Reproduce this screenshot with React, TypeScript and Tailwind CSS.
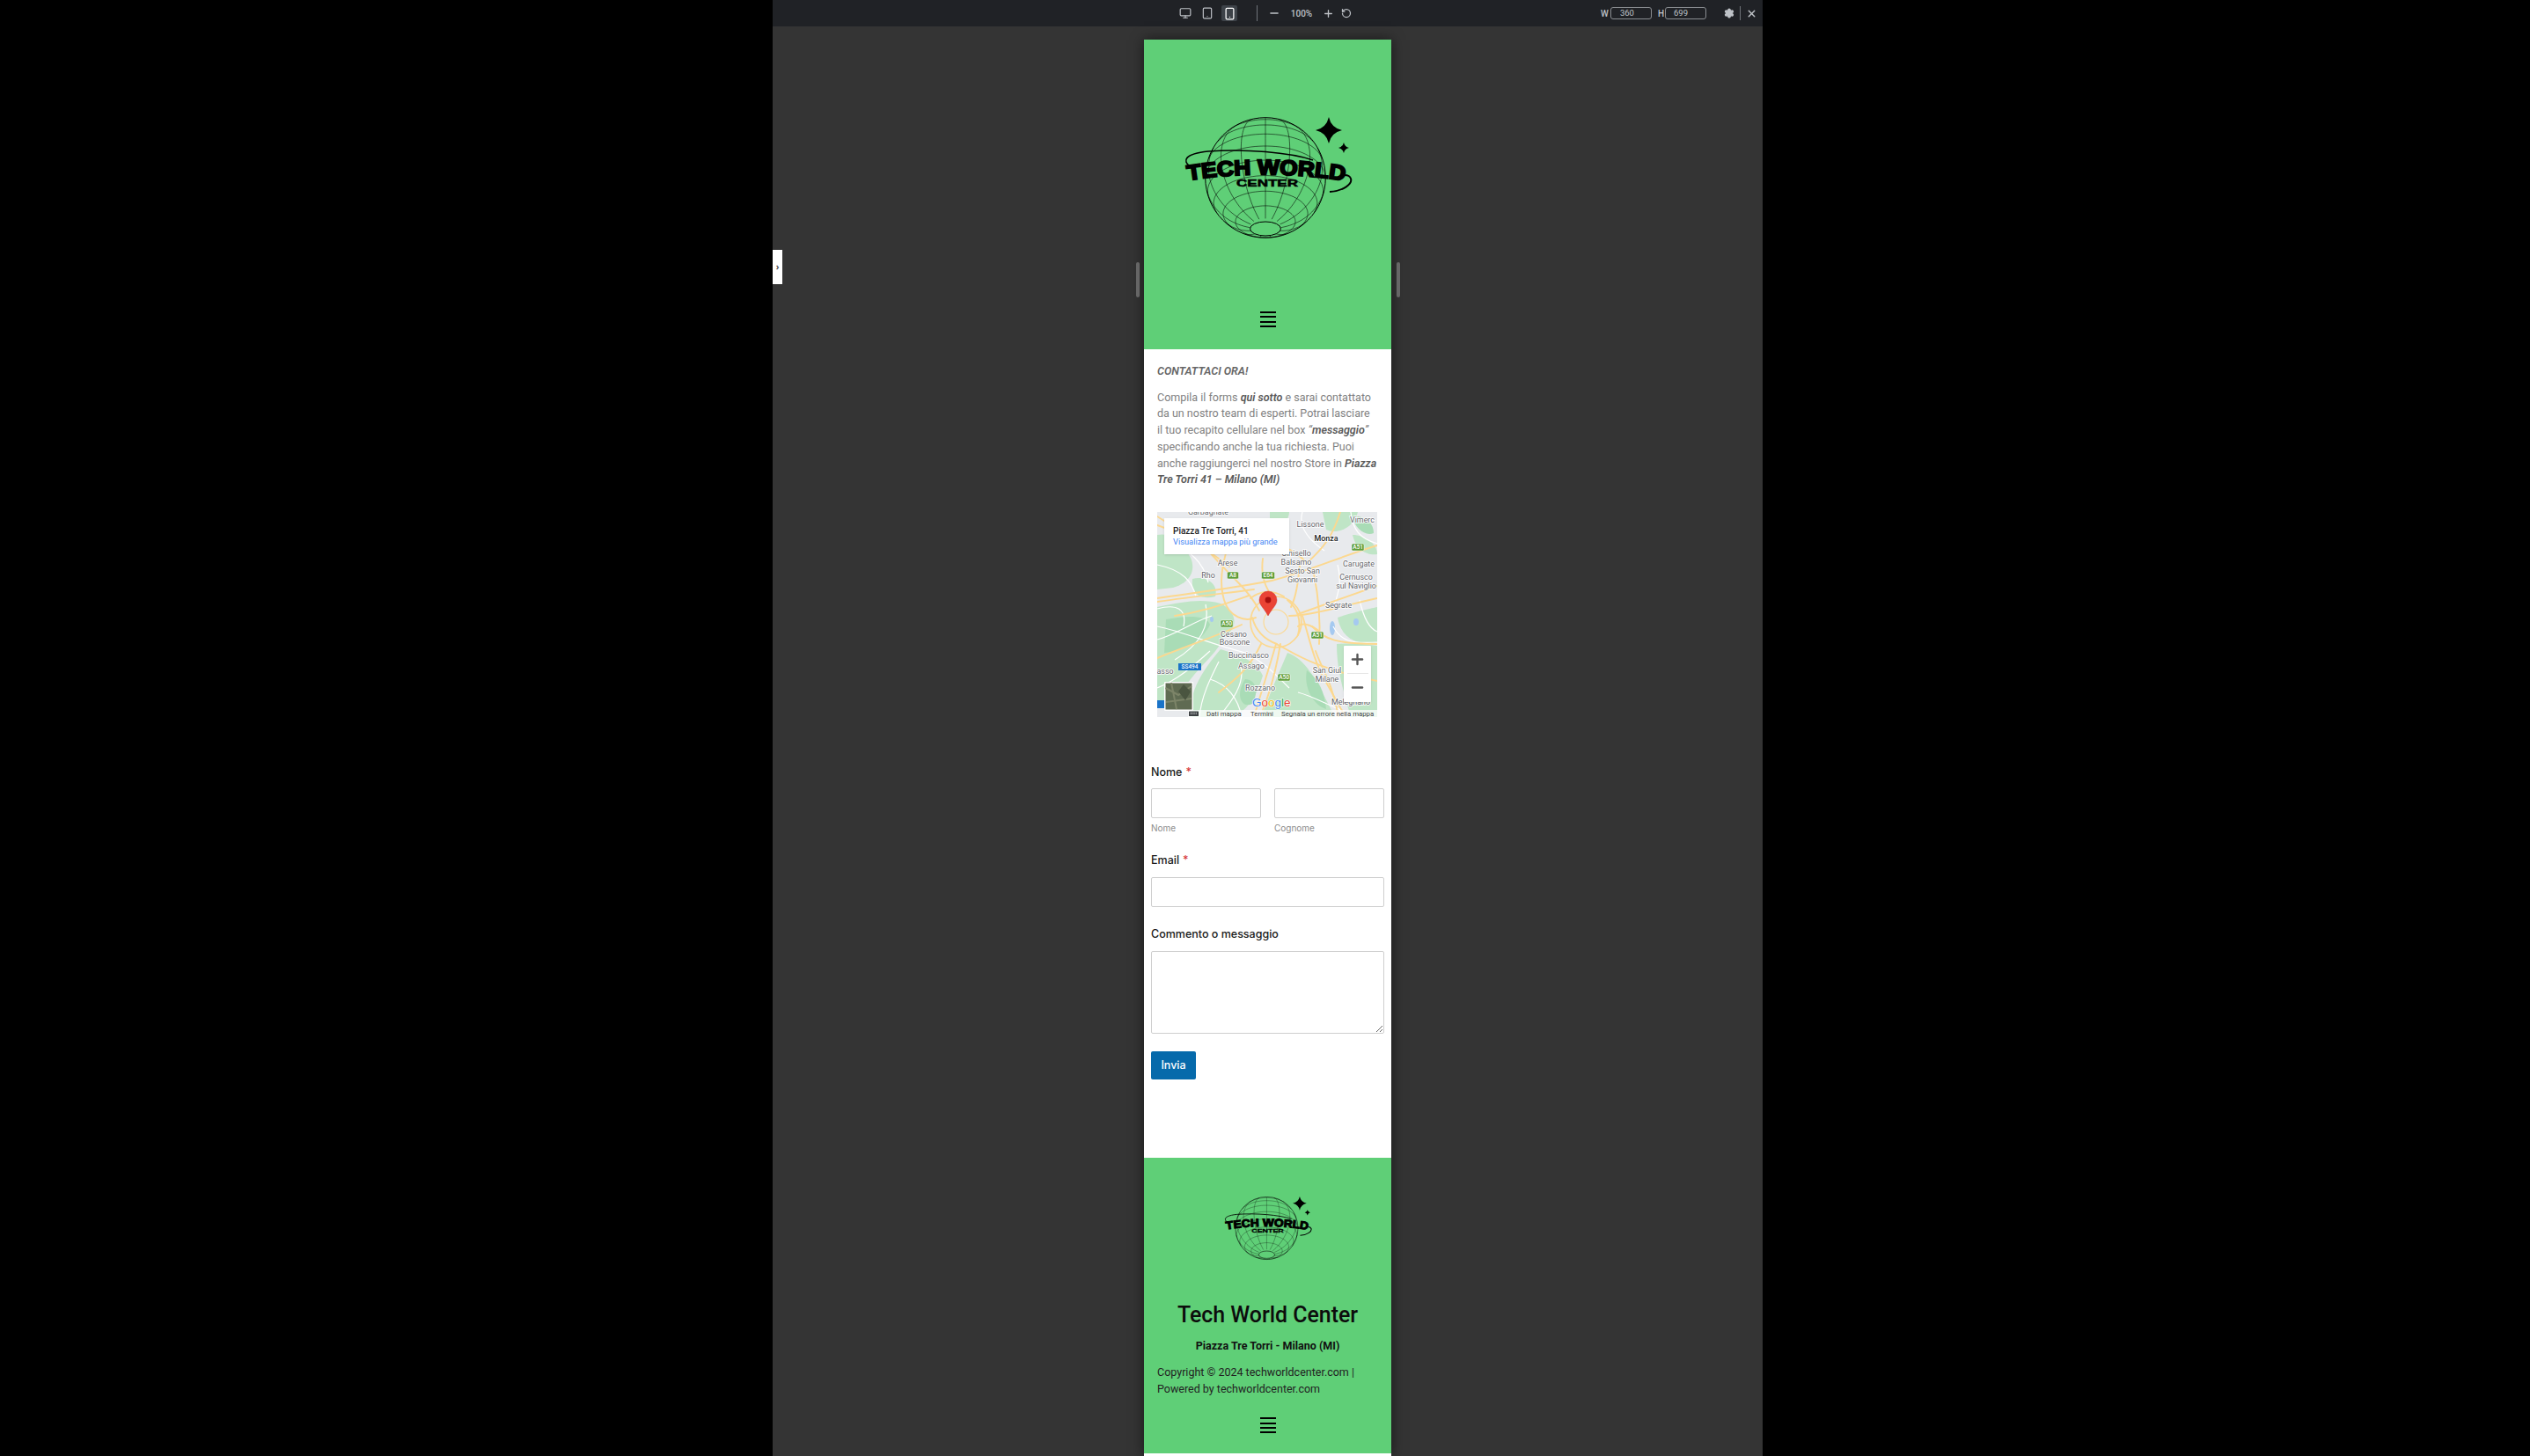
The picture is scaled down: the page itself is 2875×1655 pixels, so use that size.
import { Minus, Monitor, Plus, RotateCcw, Settings, Smartphone, Tablet, X } from "lucide-react";

// sphere wireframe seen from below, pole sits near the bottom edge
const TILT = (58 * Math.PI) / 180;

function project(colat: number, lon: number, r: number) {
  const c = (colat * Math.PI) / 180;
  const l = (lon * Math.PI) / 180;
  const x = Math.sin(c) * Math.cos(l);
  const y = Math.cos(c) * Math.sin(TILT) + Math.sin(c) * Math.sin(l) * Math.cos(TILT);
  const z = Math.cos(c) * Math.cos(TILT) - Math.sin(c) * Math.sin(l) * Math.sin(TILT);
  return { x: x * r, y: y * r, z };
}

function wirePath(points: { x: number; y: number; z: number }[]) {
  let d = "";
  let pen = false;
  for (const p of points) {
    if (p.z < 0) {
      pen = false;
      continue;
    }
    d += `${pen ? "L" : "M"}${p.x.toFixed(1)} ${p.y.toFixed(1)} `;
    pen = true;
  }
  return d;
}

function globeLines(r: number) {
  const lines: string[] = [];
  for (let colat = 30; colat <= 150; colat += 15) {
    const pts = [];
    for (let lon = 0; lon <= 360; lon += 4) pts.push(project(colat, lon, r));
    lines.push(wirePath(pts));
  }
  for (let lon = 6; lon < 360; lon += 24) {
    const pts = [];
    for (let colat = 15; colat <= 178; colat += 3) pts.push(project(colat, lon, r));
    lines.push(wirePath(pts));
  }
  return lines;
}

const Star = ({ x, y, s }: { x: number; y: number; s: number }) => (
  <path
    d={`M${x} ${y - s} Q${x + s * 0.18} ${y - s * 0.18} ${x + s} ${y} Q${x + s * 0.18} ${y + s * 0.18} ${x} ${y + s} Q${x - s * 0.18} ${y + s * 0.18} ${x - s} ${y} Q${x - s * 0.18} ${y - s * 0.18} ${x} ${y - s}Z`}
    fill="#000"
  />
);

const Logo = ({ id, className }: { id: string; className: string }) => (
  <svg viewBox="0 0 192 140" className={className}>
    <defs>
      <path id={`${id}-arc`} d="M5 72 Q93 58 186 73" />
    </defs>
    <g transform="translate(93 69)" fill="none" stroke="#000">
      {globeLines(68).map((d, i) => (
        <path key={i} d={d} strokeWidth={0.55} />
      ))}
      <circle r={68.3} strokeWidth={1} />
      <ellipse cx={0} cy={58} rx={17.5} ry={8} strokeWidth={1} fill="#5fcf77" />
    </g>
    <path d="M7 56 C-1 50 0 42 28 39 C70 36 120 40 147 49" fill="none" stroke="#000" strokeWidth={1.6} />
    <path d="M166 85 C182 84 192 76 190 70 C189 67 186 66 183 66" fill="none" stroke="#000" strokeWidth={2} />
    <text fontFamily="'Liberation Sans', sans-serif" fontWeight={700} fontSize={24} fill="#000" stroke="#000" strokeWidth={2}>
      <textPath href={`#${id}-arc`} textLength={179} lengthAdjust="spacingAndGlyphs">
        TECH WORLD
      </textPath>
    </text>
    <text x={95} y={79} textAnchor="middle" fontFamily="'Liberation Sans', sans-serif" fontWeight={700} fontSize={10.5} fill="#000" stroke="#000" strokeWidth={0.5} textLength={70} lengthAdjust="spacingAndGlyphs">
      CENTER
    </text>
    <Star x={165} y={15} s={15} />
    <Star x={182} y={35} s={6} />
  </svg>
);

const Burger = () => (
  <div className="flex w-[18px] flex-col gap-[3.3px]">
    <div className="h-[2px] bg-black" />
    <div className="h-[2px] bg-black" />
    <div className="h-[2px] bg-black" />
    <div className="h-[2px] bg-black" />
  </div>
);

const labels: [string, number, number, boolean?][] = [
  ["Lissone", 174, 17],
  ["Vimerc", 233, 12],
  ["Monza", 192, 33, true],
  ["Cinisello", 158, 50],
  ["Balsamo", 158, 60],
  ["Carugate", 229, 62],
  ["Arese", 80, 61],
  ["Rho", 58, 75],
  ["Sesto San", 165, 70],
  ["Giovanni", 165, 80],
  ["Cernusco", 226, 77],
  ["sul Naviglio", 226, 87],
  ["Segrate", 206, 109],
  ["Cesano", 87, 142],
  ["Boscone", 88, 151],
  ["Buccinasco", 104, 166],
  ["Assago", 107, 178],
  ["asso", 9, 184],
  ["Rozzano", 117, 203],
  ["San Giul", 193, 183],
  ["Milane", 193, 193],
  ["Melegnano", 220, 219],
  ["Garbagnate", 58, 3],
];

const shields: [string, number, number, number][] = [
  ["A51", 228, 40, 14],
  ["A8", 86, 72, 13],
  ["E64", 126, 72, 15],
  ["A50", 79, 127, 14],
  ["A51", 182, 140, 14],
  ["A50", 144, 188, 14],
];

const yellowRoads = [
  "M0 98 C40 92 90 86 130 78 C170 68 210 50 250 38",
  "M0 102 C40 96 80 92 110 88",
  "M80 40 C74 60 70 80 76 100 C82 120 100 125 112 120",
  "M120 53 C118 68 120 80 128 92",
  "M150 118 C170 118 190 112 250 98",
  "M160 116 L250 84",
  "M165 118 C172 140 178 170 190 190 L214 233",
  "M180 158 C186 176 200 196 206 233",
  "M135 150 C128 175 118 205 110 233",
  "M140 150 C135 180 128 205 120 225",
  "M45 30 C60 46 72 60 90 78 C100 88 110 100 116 112",
  "M0 15 C30 25 60 45 82 62",
  "M96 128 C70 140 40 150 0 166",
  "M135 150 C150 156 170 176 250 192",
  "M162 60 C160 80 158 96 152 108",
  "M178 70 C182 90 186 120 184 150",
  "M208 0 C200 26 190 40 170 58",
  "M104 95 C90 100 60 112 20 118",
  "M70 205 C90 190 106 176 118 150",
  "M160 130 C166 124 180 130 188 140",
  "M0 5 C12 12 20 18 30 30",
  "M120 40 C135 38 150 36 170 58",
  "M106 98 C116 90 130 88 144 96",
  "M148 100 C160 110 164 124 160 140",
  "M108 120 C112 135 122 145 136 150",
  "M176 130 C190 145 205 150 250 150",
];

const whiteRoads = [
  "M0 130 C30 136 60 150 100 160 C120 170 130 180 150 200",
  "M20 168 C50 150 60 128 55 105",
  "M0 60 C30 66 40 80 44 96",
  "M70 170 C60 190 50 210 48 233",
  "M200 130 C208 146 220 150 250 148",
  "M160 205 C180 210 196 222 230 233",
  "M30 130 C34 110 22 104 0 110",
  "M95 175 C100 195 85 215 70 233",
  "M220 0 C222 20 230 30 250 36",
  "M165 0 C160 16 170 30 190 44",
  "M18 40 C36 42 52 56 58 80",
  "M205 60 C210 80 206 92 200 110",
  "M0 145 C20 140 40 125 62 118",
  "M0 200 C24 190 40 176 60 158",
  "M60 190 C80 196 92 212 96 233",
  "M230 100 C234 118 240 132 250 136",
];

const GoogleMapBox = () => (
  <div className="relative h-[233px] w-[250px] overflow-hidden bg-[#e8eaed]">
    <svg viewBox="0 0 250 233" className="h-full w-full">
      <g fill="#bfe5c6">
        <path d="M0 108 C30 102 50 98 72 104 C92 114 92 132 76 142 C68 160 52 172 38 190 C26 205 14 215 0 222Z" />
        <path d="M72 156 C90 162 110 166 120 186 C114 205 106 225 84 233 L40 233 C34 212 46 186 72 156Z" />
        <path d="M148 160 C170 168 180 190 202 233 L118 233 C126 212 136 188 148 160Z" />
        <path d="M0 26 C18 22 30 38 38 52 C44 66 38 80 18 86 L0 88Z" />
        <path d="M40 76 C56 72 70 82 66 96 C50 100 38 94 40 76Z" />
        <path d="M188 0 L228 0 C224 18 204 26 192 20Z" />
        <path d="M205 120 C222 114 250 108 250 108 L250 148 C234 152 210 148 205 120Z" />
        <path d="M204 150 C226 148 250 152 250 152 L250 233 L220 233 C212 205 204 180 204 150Z" />
        <path d="M128 0 L150 0 C150 10 140 18 128 14Z" />
        <path d="M222 26 C236 26 250 36 250 48 C240 50 226 44 222 26Z" />
      </g>
      <g fill="#a9dcb6">
        <path d="M10 122 C30 118 56 116 60 128 C50 148 30 158 8 160Z" />
        <path d="M100 190 C112 190 116 204 108 218 C96 224 88 208 100 190Z" />
        <path d="M170 180 C184 190 190 205 192 224 C178 220 166 200 170 180Z" />
        <path d="M222 5 C236 4 246 12 246 24 C236 28 224 18 222 5Z" />
      </g>
      <g fill="#a5c9f0">
        <ellipse cx="199" cy="132" rx="3" ry="8" />
        <ellipse cx="226" cy="125" rx="3" ry="4" />
        <ellipse cx="62" cy="122" rx="2" ry="3" />
      </g>
      <g fill="none" stroke="#fff" strokeWidth={1.2}>
        {whiteRoads.map((d, i) => (
          <path key={i} d={d} />
        ))}
      </g>
      <g fill="none" stroke="#fcd88f" strokeWidth={1.9} strokeLinecap="round">
        {yellowRoads.map((d, i) => (
          <path key={i} d={d} />
        ))}
        <circle cx={135} cy={125} r={29} strokeWidth={1.7} />
        <circle cx={135} cy={125} r={14} strokeWidth={1.1} />
      </g>
      <g fontFamily="Roboto, sans-serif" fontSize={8.9} fill="#5f6368" stroke="#fff" strokeWidth={1.6} textAnchor="middle" style={{ paintOrder: "stroke" }}>
        {labels.map(([t, x, y, bold]) => (
          <text key={t} x={x} y={y} fontWeight={bold ? 500 : 400} fill={bold ? "#202124" : "#5f6368"}>
            {t}
          </text>
        ))}
      </g>
      <g>
        {shields.map(([t, x, y, w], i) => (
          <g key={i}>
            <rect x={x - w / 2} y={y - 4} width={w} height={8} rx={1.5} fill="#5f9e3a" stroke="#fff" strokeWidth={0.5} />
            <text x={x} y={y + 2.4} fontFamily="Roboto, sans-serif" fontSize={6.5} fontWeight={500} fill="#fff" textAnchor="middle">
              {t}
            </text>
          </g>
        ))}
        <rect x={24} y={172} width={26} height={8} fill="#1a73c8" />
        <text x={37} y={178.4} fontFamily="Roboto, sans-serif" fontSize={6.5} fontWeight={500} fill="#fff" textAnchor="middle">
          SS494
        </text>
        <rect x={0} y={214} width={9} height={9} fill="#1a73c8" />
      </g>
      <path d="M126 118 C122 110 116 106 116 100 A10 10 0 1 1 136 100 C136 106 130 110 126 118Z" fill="#ea4335" stroke="#c5221f" strokeWidth={0.4} />
      <circle cx={126} cy={100} r={3.4} fill="#a50e0e" />
      <text x={108} y={221} fontFamily="'Liberation Sans', sans-serif" fontSize={13.5} fontWeight={400} stroke="#fff" strokeWidth={1} style={{ paintOrder: "stroke" }}>
        <tspan fill="#4285f4">G</tspan>
        <tspan fill="#ea4335">o</tspan>
        <tspan fill="#fbbc05">o</tspan>
        <tspan fill="#4285f4">g</tspan>
        <tspan fill="#34a853">l</tspan>
        <tspan fill="#ea4335">e</tspan>
      </text>
      <rect x={8} y={193} width={33} height={33} fill="#fff" rx={1} />
      <rect x={9.5} y={194.5} width={30} height={30} fill="#5f6b52" />
      <path d="M9.5 200 L24 208 L39 198 M16 194 L22 224 M10 216 L39 212" stroke="#7c8468" strokeWidth={2} fill="none" />
      <path d="M30 196 L38 204 L32 214 L24 204Z" fill="#4a5540" />
      <rect x={35} y={225} width={215} height={8} fill="#fff" fillOpacity={0.75} />
      <g fill="#5f6368">
        <rect x={36} y={226.5} width={11} height={5.5} rx={0.6} fill="#3c4043" />
      </g>
      <path d="M37.5 228 H45.5 M37.5 229.5 H45.5" stroke="#fff" strokeWidth={0.6} strokeDasharray="1 0.6" />
      <g fontFamily="Roboto, sans-serif" fontSize={7.8} fill="#444">
        <text x={56} y={231.6}>Dati mappa</text>
        <text x={106} y={231.6}>Termini</text>
        <text x={141} y={231.6}>Segnala un errore nella mappa</text>
      </g>
    </svg>
    <div className="absolute left-2 top-[7px] h-[41px] w-[142px] bg-white pl-[10px] pt-[8px] font-['Roboto',sans-serif] shadow-sm">
      <div className="text-[10px] font-medium leading-[13px] text-[#202124]">Piazza Tre Torri, 41</div>
      <div className="text-[9.3px] leading-[12px] text-[#4285f4]">Visualizza mappa più grande</div>
    </div>
    <div className="absolute left-[212px] top-[152px] flex h-[64px] w-[31px] flex-col items-center rounded-[1px] bg-white shadow-sm">
      <div className="flex h-[31px] items-center justify-center">
        <Plus className="h-[19px] w-[19px] text-[#555]" strokeWidth={3} />
      </div>
      <div className="h-px w-[24px] bg-[#e6e6e6]" />
      <div className="flex h-[32px] items-center justify-center">
        <Minus className="h-[19px] w-[19px] text-[#555]" strokeWidth={3} />
      </div>
    </div>
  </div>
);

const FormLabel = ({ text, required }: { text: string; required?: boolean }) => (
  <div className="text-[12.5px] font-medium leading-[16px] text-[#1a1a1a]">
    {text}
    {required && <span className="ml-[4px] text-[#d63637]">*</span>}
  </div>
);

const Field = ({ className }: { className: string }) => (
  <input className={`block rounded-[2px] border border-[#cfcfcf] bg-white ${className}`} />
);

const Preview = () => (
  <div className="relative flex h-[1610px] w-[281px] flex-col bg-white shadow-[0_0_14px_rgba(0,0,0,0.55)]">
    <header className="flex h-[352px] flex-col items-center bg-[#5fcf77]">
      <Logo id="top" className="mt-[88px] h-[140px] w-[192px]" />
      <div className="mt-[81px]">
        <Burger />
      </div>
    </header>

    <section className="px-[15px] pt-[16px] font-['Roboto',sans-serif] text-[12.5px] leading-[18.7px] text-[#818181]">
      <p className="font-semibold italic text-[#666]">CONTATTACI ORA!</p>
      <p className="mt-[11px]">
        Compila il forms <strong className="font-semibold italic text-[#5a5a5a]">qui sotto</strong> e sarai contattato da un nostro team di esperti. Potrai lasciare
        <br />
        il tuo recapito cellulare nel box <em>“<strong className="font-semibold text-[#5a5a5a]">messaggio</strong>”</em> specificando anche la tua richiesta. Puoi anche raggiungerci nel nostro Store in <strong className="font-semibold italic text-[#5a5a5a]">Piazza Tre Torri 41 – Milano (MI)</strong>
      </p>
      <div className="mt-[27px]">
        <GoogleMapBox />
      </div>
    </section>

    <form className="px-[8px] pt-[55px] font-['Inter',sans-serif]">
      <FormLabel text="Nome" required />
      <div className="mt-[10px] grid grid-cols-2 gap-[15px]">
        <div>
          <Field className="h-[34px] w-full" />
          <div className="mt-[5px] text-[10px] leading-[13px] text-[#8c8c8c]">Nome</div>
        </div>
        <div>
          <Field className="h-[34px] w-full" />
          <div className="mt-[5px] text-[10px] leading-[13px] text-[#8c8c8c]">Cognome</div>
        </div>
      </div>
      <div className="mt-[22px]">
        <FormLabel text="Email" required />
      </div>
      <Field className="mt-[11px] h-[34px] w-full" />
      <div className="mt-[23px]">
        <FormLabel text="Commento o messaggio" />
      </div>
      <textarea className="mt-[11px] block h-[94px] w-full rounded-[2px] border border-[#cfcfcf] bg-white" />
      <button type="button" className="mt-[20px] flex h-[32px] w-[51px] items-center justify-center rounded-[2px] bg-[#066aab] text-[12.5px] font-medium text-white">
        Invia
      </button>
    </form>

    <footer className="mt-[89px] flex h-[336px] flex-col items-center bg-[#5fcf77] font-['Roboto',sans-serif] text-black">
      <Logo id="bottom" className="mt-[44px] h-[73px] w-[100px]" />
      <h2 className="mt-[46px] text-[24.9px] font-medium leading-[32px] text-[#0c0c0c]">Tech World Center</h2>
      <p className="mt-[10px] text-[12.5px] font-bold leading-[18px] text-[#111]">Piazza Tre Torri - Milano (MI)</p>
      <p className="mt-[12px] w-full px-[15px] text-[12.5px] leading-[18.7px] text-[#222]">
        Copyright © 2024 techworldcenter.com | Powered by techworldcenter.com
      </p>
      <div className="mt-[23px]">
        <Burger />
      </div>
    </footer>
  </div>
);

const ToolButton = ({ children, active }: { children: React.ReactNode; active?: boolean }) => (
  <div className={`flex h-[18px] w-[18px] items-center justify-center rounded-[2px] ${active ? "bg-[#3d4248]" : ""}`}>{children}</div>
);

const Toolbar = () => (
  <div className="flex h-[30px] shrink-0 items-center bg-[#202226] text-[#bfc3c8] font-['Roboto',sans-serif]">
    <div className="ml-[460px] flex items-center gap-[7px]">
      <ToolButton>
        <Monitor className="h-[14px] w-[14px]" strokeWidth={2} />
      </ToolButton>
      <ToolButton>
        <Tablet className="h-[14px] w-[14px]" strokeWidth={2} />
      </ToolButton>
      <ToolButton active>
        <Smartphone className="h-[15px] w-[15px] text-white" strokeWidth={2} />
      </ToolButton>
    </div>
    <div className="ml-[22px] h-[18px] w-px bg-[#70747a]" />
    <Minus className="ml-[12px] h-[14px] w-[14px]" strokeWidth={2.5} />
    <span className="ml-[10px] w-[28px] text-center text-[10px] font-medium">100%</span>
    <Plus className="ml-[10px] h-[13px] w-[13px]" strokeWidth={2.5} />
    <RotateCcw className="ml-[8px] h-[12px] w-[12px]" strokeWidth={2.5} />
    <div className="ml-auto flex items-center">
      <span className="mr-[2px] text-[10px] font-medium">W</span>
      <div className="flex h-[14px] w-[47px] items-center rounded-[3px] border border-[#8a8d91] pl-[10px] text-[9.5px]">360</div>
      <span className="ml-[7px] mr-[1px] text-[10px] font-medium">H</span>
      <div className="flex h-[14px] w-[47px] items-center rounded-[3px] border border-[#8a8d91] pl-[9px] text-[9.5px]">699</div>
      <Settings className="ml-[20px] h-[12px] w-[12px] fill-[#bfc3c8]" strokeWidth={2.5} />
      <div className="ml-[6px] h-[16px] w-px bg-[#70747a]" />
      <X className="ml-[6px] mr-[6px] h-[13px] w-[13px]" strokeWidth={2.5} />
    </div>
  </div>
);

export default function App() {
  return (
    <div className="flex h-[1655px] w-[2875px] overflow-hidden bg-black">
      <main className="relative ml-[878px] flex h-full w-[1125px] flex-col bg-[#343434]">
        <Toolbar />
        <div className="relative flex flex-1 justify-center pt-[15px]">
          <Preview />
          <div className="absolute left-[413px] top-[268px] h-[40px] w-[4px] rounded-[2px] bg-[#666]" />
          <div className="absolute left-[709px] top-[268px] h-[40px] w-[4px] rounded-[2px] bg-[#666]" />
        </div>
        <div className="absolute left-0 top-[284px] flex h-[39px] w-[11px] items-center justify-center bg-white text-[10px] font-bold text-[#555]">
          ›
        </div>
      </main>
    </div>
  );
}
